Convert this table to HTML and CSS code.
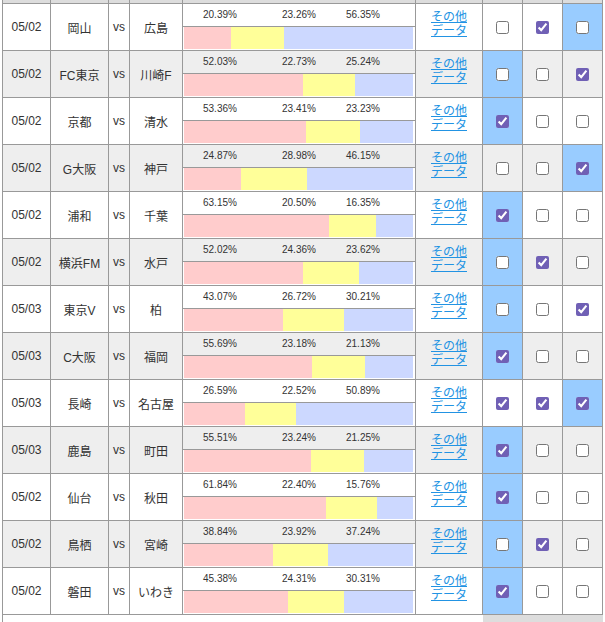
FILE: index.html
```html
<!DOCTYPE html>
<html lang="ja">
<head>
<meta charset="utf-8">
<title>予想</title>
<link rel="stylesheet" href="styles.css">
</head>
<body>
<table class="grid">
<colgroup>
<col class="w-date"><col class="w-team"><col class="w-vs"><col class="w-team2"><col class="w-prob"><col class="w-more"><col class="w-pick"><col class="w-pick"><col class="w-pick">
</colgroup>
<tr class="head"><td></td><td></td><td></td><td></td><td></td><td></td><td></td><td></td><td></td></tr>

<tr class="odd">
<td class="date">05/02</td><td class="team">岡山</td><td class="vs">vs</td><td class="team">広島</td>
<td class="prob"><div class="pct"><span>20.39%</span><span>23.26%</span><span>56.35%</span></div><div class="barwrap"><div class="bar"><i class="home" style="width:20.39%"></i><i class="draw" style="width:23.26%"></i><i class="away" style="width:56.35%"></i></div></div></td>
<td class="more"><a href="#"><span>その他</span><span>データ</span></a></td>
<td class="pick"><input type="checkbox"></td><td class="pick"><input type="checkbox" checked></td><td class="pick hl"><input type="checkbox"></td>
</tr>

<tr class="even">
<td class="date">05/02</td><td class="team">FC東京</td><td class="vs">vs</td><td class="team">川崎F</td>
<td class="prob"><div class="pct"><span>52.03%</span><span>22.73%</span><span>25.24%</span></div><div class="barwrap"><div class="bar"><i class="home" style="width:52.03%"></i><i class="draw" style="width:22.73%"></i><i class="away" style="width:25.24%"></i></div></div></td>
<td class="more"><a href="#"><span>その他</span><span>データ</span></a></td>
<td class="pick hl"><input type="checkbox"></td><td class="pick"><input type="checkbox"></td><td class="pick"><input type="checkbox" checked></td>
</tr>

<tr class="odd">
<td class="date">05/02</td><td class="team">京都</td><td class="vs">vs</td><td class="team">清水</td>
<td class="prob"><div class="pct"><span>53.36%</span><span>23.41%</span><span>23.23%</span></div><div class="barwrap"><div class="bar"><i class="home" style="width:53.36%"></i><i class="draw" style="width:23.41%"></i><i class="away" style="width:23.23%"></i></div></div></td>
<td class="more"><a href="#"><span>その他</span><span>データ</span></a></td>
<td class="pick hl"><input type="checkbox" checked></td><td class="pick"><input type="checkbox"></td><td class="pick"><input type="checkbox"></td>
</tr>

<tr class="even">
<td class="date">05/02</td><td class="team">G大阪</td><td class="vs">vs</td><td class="team">神戸</td>
<td class="prob"><div class="pct"><span>24.87%</span><span>28.98%</span><span>46.15%</span></div><div class="barwrap"><div class="bar"><i class="home" style="width:24.87%"></i><i class="draw" style="width:28.98%"></i><i class="away" style="width:46.15%"></i></div></div></td>
<td class="more"><a href="#"><span>その他</span><span>データ</span></a></td>
<td class="pick"><input type="checkbox"></td><td class="pick"><input type="checkbox"></td><td class="pick hl"><input type="checkbox" checked></td>
</tr>

<tr class="odd">
<td class="date">05/02</td><td class="team">浦和</td><td class="vs">vs</td><td class="team">千葉</td>
<td class="prob"><div class="pct"><span>63.15%</span><span>20.50%</span><span>16.35%</span></div><div class="barwrap"><div class="bar"><i class="home" style="width:63.15%"></i><i class="draw" style="width:20.50%"></i><i class="away" style="width:16.35%"></i></div></div></td>
<td class="more"><a href="#"><span>その他</span><span>データ</span></a></td>
<td class="pick hl"><input type="checkbox" checked></td><td class="pick"><input type="checkbox"></td><td class="pick"><input type="checkbox"></td>
</tr>

<tr class="even">
<td class="date">05/02</td><td class="team">横浜FM</td><td class="vs">vs</td><td class="team">水戸</td>
<td class="prob"><div class="pct"><span>52.02%</span><span>24.36%</span><span>23.62%</span></div><div class="barwrap"><div class="bar"><i class="home" style="width:52.02%"></i><i class="draw" style="width:24.36%"></i><i class="away" style="width:23.62%"></i></div></div></td>
<td class="more"><a href="#"><span>その他</span><span>データ</span></a></td>
<td class="pick hl"><input type="checkbox"></td><td class="pick"><input type="checkbox" checked></td><td class="pick"><input type="checkbox"></td>
</tr>

<tr class="odd">
<td class="date">05/03</td><td class="team">東京V</td><td class="vs">vs</td><td class="team">柏</td>
<td class="prob"><div class="pct"><span>43.07%</span><span>26.72%</span><span>30.21%</span></div><div class="barwrap"><div class="bar"><i class="home" style="width:43.07%"></i><i class="draw" style="width:26.72%"></i><i class="away" style="width:30.21%"></i></div></div></td>
<td class="more"><a href="#"><span>その他</span><span>データ</span></a></td>
<td class="pick hl"><input type="checkbox"></td><td class="pick"><input type="checkbox"></td><td class="pick"><input type="checkbox" checked></td>
</tr>

<tr class="even">
<td class="date">05/03</td><td class="team">C大阪</td><td class="vs">vs</td><td class="team">福岡</td>
<td class="prob"><div class="pct"><span>55.69%</span><span>23.18%</span><span>21.13%</span></div><div class="barwrap"><div class="bar"><i class="home" style="width:55.69%"></i><i class="draw" style="width:23.18%"></i><i class="away" style="width:21.13%"></i></div></div></td>
<td class="more"><a href="#"><span>その他</span><span>データ</span></a></td>
<td class="pick hl"><input type="checkbox" checked></td><td class="pick"><input type="checkbox"></td><td class="pick"><input type="checkbox"></td>
</tr>

<tr class="odd">
<td class="date">05/03</td><td class="team">長崎</td><td class="vs">vs</td><td class="team">名古屋</td>
<td class="prob"><div class="pct"><span>26.59%</span><span>22.52%</span><span>50.89%</span></div><div class="barwrap"><div class="bar"><i class="home" style="width:26.59%"></i><i class="draw" style="width:22.52%"></i><i class="away" style="width:50.89%"></i></div></div></td>
<td class="more"><a href="#"><span>その他</span><span>データ</span></a></td>
<td class="pick"><input type="checkbox" checked></td><td class="pick"><input type="checkbox" checked></td><td class="pick hl"><input type="checkbox" checked></td>
</tr>

<tr class="even">
<td class="date">05/03</td><td class="team">鹿島</td><td class="vs">vs</td><td class="team">町田</td>
<td class="prob"><div class="pct"><span>55.51%</span><span>23.24%</span><span>21.25%</span></div><div class="barwrap"><div class="bar"><i class="home" style="width:55.51%"></i><i class="draw" style="width:23.24%"></i><i class="away" style="width:21.25%"></i></div></div></td>
<td class="more"><a href="#"><span>その他</span><span>データ</span></a></td>
<td class="pick hl"><input type="checkbox" checked></td><td class="pick"><input type="checkbox"></td><td class="pick"><input type="checkbox"></td>
</tr>

<tr class="odd">
<td class="date">05/02</td><td class="team">仙台</td><td class="vs">vs</td><td class="team">秋田</td>
<td class="prob"><div class="pct"><span>61.84%</span><span>22.40%</span><span>15.76%</span></div><div class="barwrap"><div class="bar"><i class="home" style="width:61.84%"></i><i class="draw" style="width:22.40%"></i><i class="away" style="width:15.76%"></i></div></div></td>
<td class="more"><a href="#"><span>その他</span><span>データ</span></a></td>
<td class="pick hl"><input type="checkbox" checked></td><td class="pick"><input type="checkbox"></td><td class="pick"><input type="checkbox"></td>
</tr>

<tr class="even">
<td class="date">05/02</td><td class="team">鳥栖</td><td class="vs">vs</td><td class="team">宮崎</td>
<td class="prob"><div class="pct"><span>38.84%</span><span>23.92%</span><span>37.24%</span></div><div class="barwrap"><div class="bar"><i class="home" style="width:38.84%"></i><i class="draw" style="width:23.92%"></i><i class="away" style="width:37.24%"></i></div></div></td>
<td class="more"><a href="#"><span>その他</span><span>データ</span></a></td>
<td class="pick hl"><input type="checkbox"></td><td class="pick"><input type="checkbox" checked></td><td class="pick"><input type="checkbox"></td>
</tr>

<tr class="odd">
<td class="date">05/02</td><td class="team">磐田</td><td class="vs">vs</td><td class="team">いわき</td>
<td class="prob"><div class="pct"><span>45.38%</span><span>24.31%</span><span>30.31%</span></div><div class="barwrap"><div class="bar"><i class="home" style="width:45.38%"></i><i class="draw" style="width:24.31%"></i><i class="away" style="width:30.31%"></i></div></div></td>
<td class="more"><a href="#"><span>その他</span><span>データ</span></a></td>
<td class="pick hl"><input type="checkbox" checked></td><td class="pick"><input type="checkbox"></td><td class="pick"><input type="checkbox"></td>
</tr>

<tr class="foot"><td colspan="6" class="foot-blank"></td><td colspan="3" class="foot-gray"></td></tr>
</table>
</body>
</html>
```

FILE: styles.css
```css
body {
  margin: 0;
  background: #fff;
  color: #333;
  font-family: "Liberation Sans", "Noto Sans CJK JP", sans-serif;
  font-size: 12px;
}

.grid {
  border-collapse: collapse;
  table-layout: fixed;
  width: 601px;
  margin-left: 2px;
}

.w-date { width: 48px; }
.w-team { width: 58px; }
.w-vs { width: 21px; }
.w-team2 { width: 53px; }
.w-prob { width: 233px; }
.w-more { width: 67px; }
.w-pick { width: 40px; }

.grid td {
  border: 1px solid #999;
  padding: 0;
  height: 46px;
  text-align: center;
  vertical-align: middle;
}

.grid .head td {
  height: 3px;
  border-top: 0;
  background: #ddd;
}

.even td { background: #eee; }
.grid td.hl { background: #99ccff; }

.date, .team, .vs { color: #333; }

.prob { vertical-align: top; }

.pct {
  display: flex;
  height: 22px;
  line-height: 22px;
  font-size: 10px;
  padding-left: 20px;
  text-align: left;
  border-bottom: 1px solid #999;
}
.pct span:nth-child(1) { width: 79px; }
.pct span:nth-child(2) { width: 64px; }

.barwrap {
  background: #fff;
  padding: 0 2px 1px 1px;
}
.bar {
  display: flex;
  height: 22px;
}
.bar i { display: block; height: 100%; }
.bar .home { background: #ffcccc; }
.bar .draw { background: #ffff99; }
.bar .away { background: #ccd8ff; }

.more a {
  display: inline-flex;
  flex-direction: column;
  align-items: center;
  color: #2293e3;
  text-decoration: underline;
  font-family: "Noto Sans CJK JP", sans-serif;
  font-size: 12px;
  line-height: 14px;
  margin-bottom: 9px;
}
.more a span {
  display: block;
  height: 14px;
  overflow: visible;
}

.pick input {
  display: block;
  margin: 0 auto;
  width: 13px;
  height: 13px;
  accent-color: #7060b5;
}

.grid .foot td {
  height: 20px;
  border-bottom: 0;
}
.grid .foot .foot-blank {
  border-right: 0;
  background: #fff;
}
.grid .foot .foot-gray {
  border-left: 0;
  border-right: 0;
  background: #ddd;
}
```
